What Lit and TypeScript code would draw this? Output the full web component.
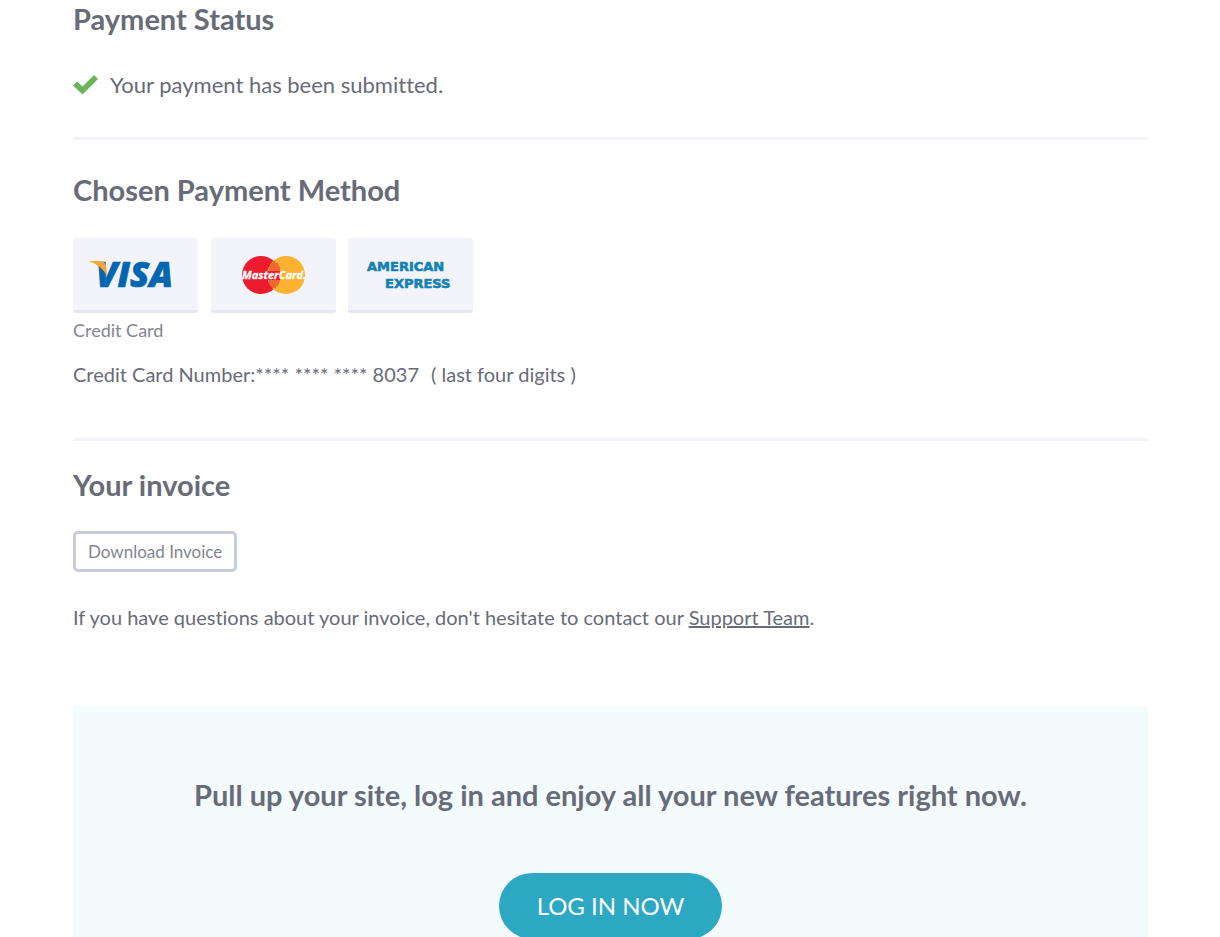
import { LitElement, html, css } from "lit";
import { customElement } from "lit/decorators.js";

@customElement("card-logos")
export class CardLogos extends LitElement {
  static styles = css`
    :host {
      display: block;
    }
    .logos {
      display: flex;
      justify-content: space-between;
      max-width: 400px;
      margin: 0;
      padding: 0;
      list-style: none;
    }
    .card {
      box-sizing: border-box;
      width: 125px;
      height: 75px;
      border-bottom: 3px solid #e5e6f2;
      border-radius: 3px;
      background: #f3f4f9;
    }
    .logo {
      display: block;
    }
    .visa {
      font: italic 800 35px "Open Sans", sans-serif;
      fill: #0066b2;
      stroke: #0066b2;
      stroke-width: 0.7;
    }
    .mastercard {
      font: italic 700 11px "Open Sans", sans-serif;
      fill: #fff;
      stroke: #fff;
      stroke-width: 0.3;
    }
    .amex {
      font: 700 13px "DejaVu Sans", sans-serif;
      fill: #1580b4;
      stroke: #1580b4;
      stroke-width: 0.6;
    }
  `;

  render() {
    return html`
      <ul class="logos">
        <li class="card">
          <svg class="logo" width="125" height="72" viewBox="0 0 125 72" role="img" aria-label="Visa">
            <text class="visa" x="23" y="49">VISA</text>
            <path d="M16 23H28Q32 24 33 28L34 38Q28 27 16 23Z" fill="#f9a533" />
          </svg>
        </li>
        <li class="card">
          <svg class="logo" width="125" height="72" viewBox="0 0 125 72" role="img" aria-label="MasterCard">
            <circle cx="50" cy="37" r="19" fill="#ed1b2e" />
            <circle cx="75" cy="37" r="19" fill="#fcb131" />
            <path
              d="M62 24H64M60 26H67M58 28H68M58 30H69M58 32H69M58 43H69M58 45H68M59 47H67M60 49H65"
              stroke="#ed1b2e"
              stroke-width="1"
            />
            <path d="M56 33H69V42H56Z" fill="#ed1b2e" />
            <text class="mastercard" x="31" y="41">MasterCard.</text>
          </svg>
        </li>
        <li class="card">
          <svg class="logo" width="125" height="72" viewBox="0 0 125 72" role="img" aria-label="American Express">
            <text class="amex" x="19" y="33">AMERICAN</text>
            <text class="amex" x="37" y="50">EXPRESS</text>
          </svg>
        </li>
      </ul>
    `;
  }
}

@customElement("app-root")
export class AppRoot extends LitElement {
  static styles = css`
    :host {
      display: block;
      padding: 0 72px 0 73px;
      background: #fff;
      color: #686b78;
      font: 20px/30px Lato, sans-serif;
      font-variant-ligatures: none;
    }
    .title {
      margin: 0;
      font-size: 29px;
      line-height: 38px;
      font-weight: 700;
    }
    .section {
      border-bottom: 3px solid #f3f4f9;
    }
    .status {
      padding-bottom: 37px;
    }
    .method {
      padding: 31px 0 49px;
    }
    .invoice {
      padding: 25px 0 74px;
    }
    .message {
      display: flex;
      align-items: center;
      gap: 12px;
      margin: 32px 0 0;
      font-size: 22px;
    }
    .logos {
      margin-top: 29px;
    }
    .caption {
      margin: 2px 0 14px;
      color: #83858f;
      font-size: 18px;
    }
    .text {
      margin: 0;
    }
    .hint {
      margin-left: 12px;
    }
    .download {
      display: block;
      height: 41px;
      margin: 27px 0 30px;
      padding: 0 12px;
      border: 3px solid #c9ccda;
      border-radius: 5px;
      background: #fff;
      color: #83858f;
      font: 17px/30px Lato, sans-serif;
      cursor: pointer;
    }
    .link {
      color: inherit;
      text-decoration: underline;
    }
    .banner {
      display: flex;
      flex-direction: column;
      align-items: center;
      gap: 59px;
      padding: 70px 24px;
      background: #f3fbfd;
      text-align: center;
    }
    .login {
      padding: 18px 38px;
      border: 0;
      border-radius: 33px;
      background: #2ca8c2;
      color: #fff;
      font: 24px/30px Lato, sans-serif;
      cursor: pointer;
    }
  `;

  render() {
    return html`
      <main>
        <section class="section status">
          <h2 class="title">Payment Status</h2>
          <p class="message">
            <svg width="25" height="20" viewBox="0 0 25 20" aria-hidden="true">
              <path d="M0 10.500L4 6.500L9.500 11.500L21 0L25 4L9.500 19.500Z" fill="#6ab557" />
            </svg>
            Your payment has been submitted.
          </p>
        </section>
        <section class="section method">
          <h2 class="title">Chosen Payment Method</h2>
          <card-logos class="logos"></card-logos>
          <p class="caption">Credit Card</p>
          <p class="text">
            Credit Card Number:**** **** **** 8037<span class="hint">( last four digits )</span>
          </p>
        </section>
        <section class="invoice">
          <h2 class="title">Your invoice</h2>
          <button class="download" type="button">Download Invoice</button>
          <p class="text">
            If you have questions about your invoice, don't hesitate to contact our
            <a class="link" href="#support">Support Team</a>.
          </p>
        </section>
        <section class="banner">
          <h2 class="title">Pull up your site, log in and enjoy all your new features right now.</h2>
          <button class="login" type="button">LOG IN NOW</button>
        </section>
      </main>
    `;
  }
}
